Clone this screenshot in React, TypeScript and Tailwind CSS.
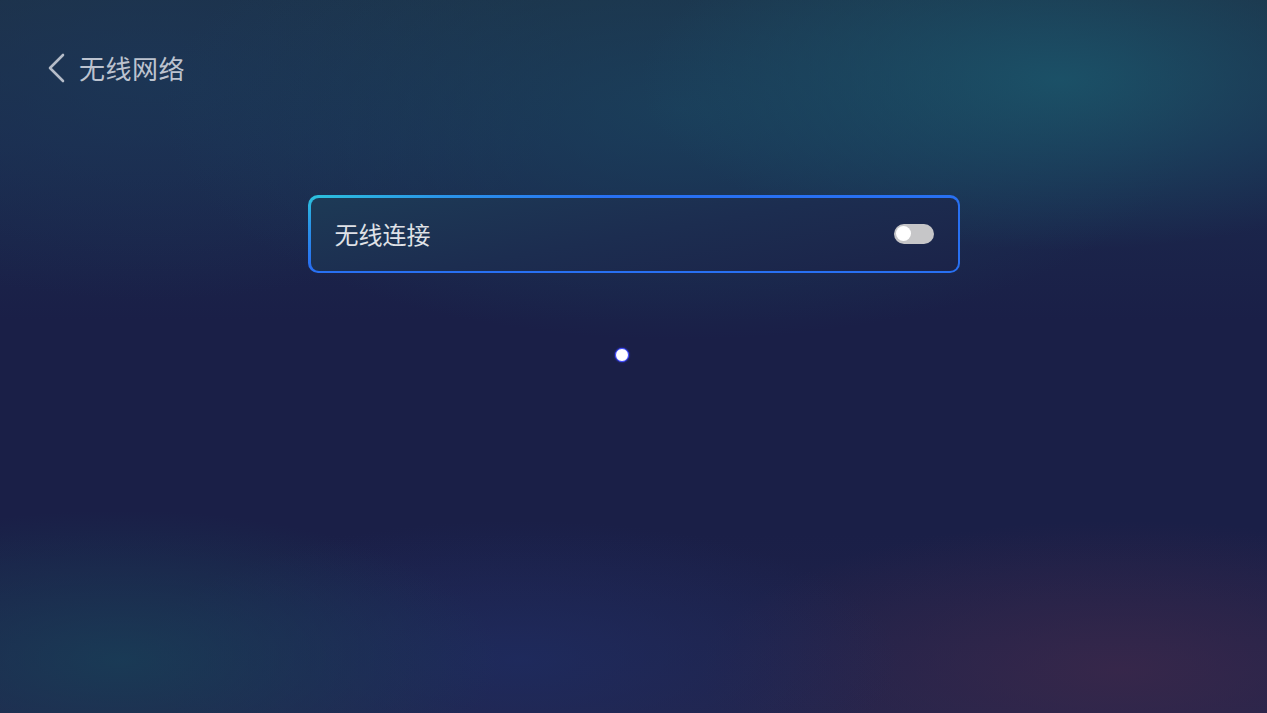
import React from "react";

export default function App() {
  return (
    <div
      className="relative w-[1267px] h-[713px] overflow-hidden bg-[#1a1f47]"
      style={{ fontFamily: '"Noto Sans CJK SC", "Noto Sans", sans-serif' }}
    >
      {/* background glows */}
      <div className="absolute inset-0 bg-[radial-gradient(ellipse_420px_170px_at_1060px_80px,rgba(27,82,104,0.95),transparent),radial-gradient(ellipse_520px_230px_at_680px_110px,rgba(26,70,96,0.7),transparent),radial-gradient(ellipse_420px_220px_at_150px_80px,rgba(28,56,88,0.75),transparent),radial-gradient(ellipse_380px_150px_at_120px_660px,rgba(24,64,88,0.8),transparent),radial-gradient(ellipse_380px_140px_at_520px_660px,rgba(30,44,96,0.8),transparent),radial-gradient(ellipse_420px_150px_at_1120px_670px,rgba(60,40,74,0.8),transparent),linear-gradient(180deg,#1d3046_0%,#1b2a4e_20%,#1a1f47_45%,#1a1f47_75%,#22244c_100%)]" />
      <div className="absolute inset-0 bg-[radial-gradient(ellipse_100%_100%_at_50%_50%,transparent_70%,rgba(20,24,40,0.35)_100%)]" />

      <div className="relative flex flex-col h-full">
        {/* header */}
        <div className="flex items-center h-[40px] mt-[48px] pl-[46px] gap-[13px]">
          <svg width="20" height="32" viewBox="0 0 20 32" fill="none">
            <path d="M17 3 L4 16 L17 29" stroke="#b5bcc8" strokeWidth="2.6" strokeLinecap="round" strokeLinejoin="round" />
          </svg>
          <span className="text-[26px] text-[#bcc3cf] tracking-[0.5px] leading-none">无线网络</span>
        </div>

        {/* card */}
        <div className="mt-[107px] ml-[308px] w-[652px] h-[78px] rounded-[10px] p-[2.5px] bg-[radial-gradient(ellipse_300px_70px_at_0_0,#2cc2dc_0%,#2a94e8_45%,#2870f2_100%)]">
          <div className="w-full h-full rounded-[8px] flex items-center justify-between pl-[24px] pr-[24px] bg-[linear-gradient(170deg,#1d3a56_0%,#1c2d50_50%,#1b2349_100%)]">
            <span className="text-[24px] text-[#dfe1e6] leading-none">无线连接</span>
            <div className="w-[40px] h-[20px] rounded-full bg-[#c6c6c8] flex items-center pl-[2px] -mt-[1px]">
              <div className="w-[15px] h-[15px] rounded-full bg-white" />
            </div>
          </div>
        </div>

        {/* dot */}
        <div className="mt-[75px] ml-[615px] w-[14px] h-[14px] rounded-full bg-white border-[1.5px] border-[#3b46ff] shadow-[0_0_2px_#3b46ff]" />
      </div>
    </div>
  );
}
